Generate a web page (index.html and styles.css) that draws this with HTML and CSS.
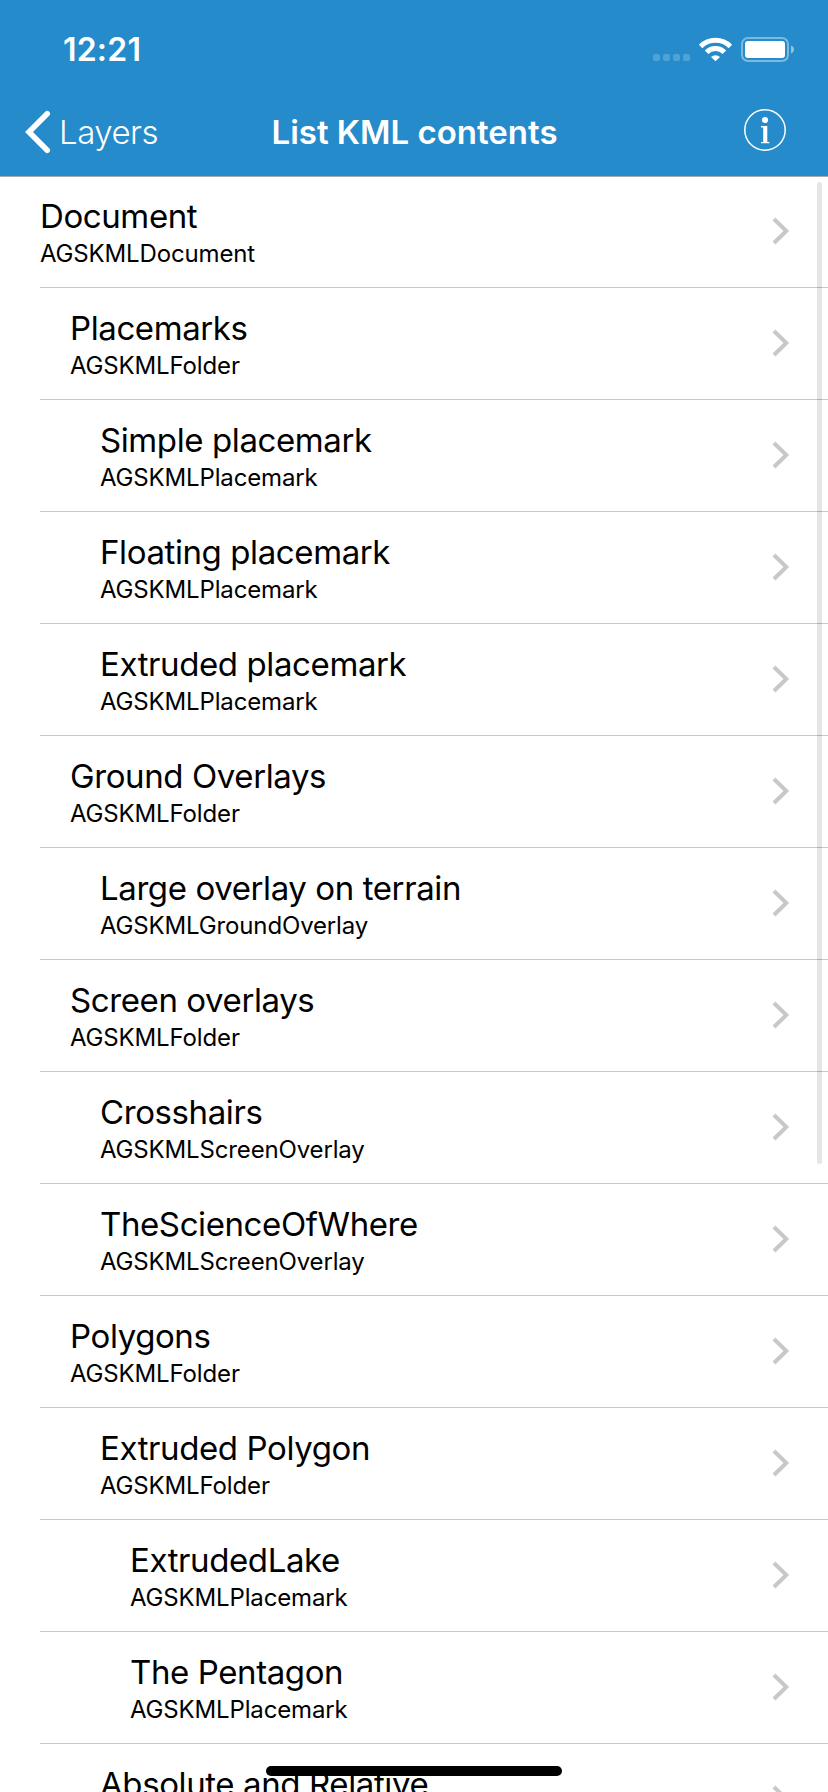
FILE: index.html
```html
<!DOCTYPE html>
<html lang="en">
<head>
<meta charset="utf-8">
<title>List KML contents</title>
<link rel="stylesheet" href="styles.css">
</head>
<body>
<div class="screen">
  <header class="header">
    <div class="status">
      <span class="time">12:21</span>
      <svg class="status-icons" width="144" height="30" viewBox="652 34 144 30">
        <g fill="#fff" fill-opacity=".2">
          <rect x="653" y="54" width="7" height="7" rx="2"/><rect x="663" y="54" width="7" height="7" rx="2"/><rect x="673" y="54" width="7" height="7" rx="2"/><rect x="683" y="54" width="7" height="7" rx="2"/>
        </g>
        <g fill="none" stroke="#fff" stroke-width="5">
          <path d="M700.6 46.4a21 21 0 0 1 29.8 0"/>
          <path d="M706.6 52.3a12.6 12.6 0 0 1 17.8 0"/>
        </g>
        <path d="M711 56.9a6.6 6.6 0 0 1 9 0l-4.5 4.3z" fill="#fff"/>
        <rect x="742" y="38" width="46" height="23" rx="6" fill="none" stroke="#fff" stroke-opacity=".4" stroke-width="2"/>
        <rect x="745" y="41" width="40" height="17" rx="3" fill="#fff"/>
        <path d="M791 45.500c4 1.500 4 6.500 0 8z" fill="#fff" fill-opacity=".5"/>
      </svg>
    </div>
    <nav class="nav">
      <a class="back">
        <svg width="27" height="44" viewBox="25 110 27 44"><path d="M47.200 113.800L29 132l18.200 18.200" fill="none" stroke="#fff" stroke-width="5.600" stroke-linecap="round"/></svg>
        <span class="back-label">Layers</span>
      </a>
      <h1 class="title">List KML contents</h1>
      <svg class="info" width="42" height="42" viewBox="0 0 42 42">
        <circle cx="21" cy="21" r="20.200" fill="none" stroke="#fff" stroke-width="1.500"/>
        <circle cx="21" cy="11" r="3.100" fill="#fff"/>
        <path d="M17 17h6.300v16h2v1.200h-8.300V33h2.200V18.400H17z" fill="#fff"/>
      </svg>
    </nav>
  </header>
  <main class="list">
    <div class="row"><div class="text"><div class="name">Document</div><div class="kind">AGSKMLDocument</div></div><svg class="chevron" viewBox="0 0 18 28"><path d="M2 2l12.300 12L2 26"/></svg></div>
    <div class="row level-1"><div class="text"><div class="name">Placemarks</div><div class="kind">AGSKMLFolder</div></div><svg class="chevron" viewBox="0 0 18 28"><path d="M2 2l12.300 12L2 26"/></svg></div>
    <div class="row level-2"><div class="text"><div class="name">Simple placemark</div><div class="kind">AGSKMLPlacemark</div></div><svg class="chevron" viewBox="0 0 18 28"><path d="M2 2l12.300 12L2 26"/></svg></div>
    <div class="row level-2"><div class="text"><div class="name">Floating placemark</div><div class="kind">AGSKMLPlacemark</div></div><svg class="chevron" viewBox="0 0 18 28"><path d="M2 2l12.300 12L2 26"/></svg></div>
    <div class="row level-2"><div class="text"><div class="name">Extruded placemark</div><div class="kind">AGSKMLPlacemark</div></div><svg class="chevron" viewBox="0 0 18 28"><path d="M2 2l12.300 12L2 26"/></svg></div>
    <div class="row level-1"><div class="text"><div class="name">Ground Overlays</div><div class="kind">AGSKMLFolder</div></div><svg class="chevron" viewBox="0 0 18 28"><path d="M2 2l12.300 12L2 26"/></svg></div>
    <div class="row level-2"><div class="text"><div class="name">Large overlay on terrain</div><div class="kind">AGSKMLGroundOverlay</div></div><svg class="chevron" viewBox="0 0 18 28"><path d="M2 2l12.300 12L2 26"/></svg></div>
    <div class="row level-1"><div class="text"><div class="name">Screen overlays</div><div class="kind">AGSKMLFolder</div></div><svg class="chevron" viewBox="0 0 18 28"><path d="M2 2l12.300 12L2 26"/></svg></div>
    <div class="row level-2"><div class="text"><div class="name">Crosshairs</div><div class="kind">AGSKMLScreenOverlay</div></div><svg class="chevron" viewBox="0 0 18 28"><path d="M2 2l12.300 12L2 26"/></svg></div>
    <div class="row level-2"><div class="text"><div class="name">TheScienceOfWhere</div><div class="kind">AGSKMLScreenOverlay</div></div><svg class="chevron" viewBox="0 0 18 28"><path d="M2 2l12.300 12L2 26"/></svg></div>
    <div class="row level-1"><div class="text"><div class="name">Polygons</div><div class="kind">AGSKMLFolder</div></div><svg class="chevron" viewBox="0 0 18 28"><path d="M2 2l12.300 12L2 26"/></svg></div>
    <div class="row level-2"><div class="text"><div class="name">Extruded Polygon</div><div class="kind">AGSKMLFolder</div></div><svg class="chevron" viewBox="0 0 18 28"><path d="M2 2l12.300 12L2 26"/></svg></div>
    <div class="row level-3"><div class="text"><div class="name">ExtrudedLake</div><div class="kind">AGSKMLPlacemark</div></div><svg class="chevron" viewBox="0 0 18 28"><path d="M2 2l12.300 12L2 26"/></svg></div>
    <div class="row level-3"><div class="text"><div class="name">The Pentagon</div><div class="kind">AGSKMLPlacemark</div></div><svg class="chevron" viewBox="0 0 18 28"><path d="M2 2l12.300 12L2 26"/></svg></div>
    <div class="row level-2"><div class="text"><div class="name">Absolute and Relative</div></div><svg class="chevron" viewBox="0 0 18 28"><path d="M2 2l12.300 12L2 26"/></svg></div>
  </main>
  <div class="scrollbar"></div>
  <div class="home-indicator"></div>
</div>
</body>
</html>
```

FILE: styles.css
```css
* { box-sizing: border-box; }
body {
  margin: 0;
  background: #fff;
  color: #000;
  font-family: Inter, "Liberation Sans", sans-serif;
}
.screen {
  position: relative;
  display: flex;
  flex-direction: column;
  width: 828px;
  height: 1792px;
  overflow: hidden;
}
.header {
  flex: none;
  height: 176px;
  background: #258bca;
  box-shadow: 0 1px #a7a9ac;
  color: #fff;
}
.status {
  display: flex;
  justify-content: space-between;
  height: 88px;
  padding: 34px 32px 0 63px;
}
.time {
  font-size: 32px;
  line-height: 32px;
  font-weight: 600;
  letter-spacing: 0.2px;
}
.nav {
  display: grid;
  grid-template-columns: 1fr auto 1fr;
  height: 88px;
  padding: 0 42px 0 25px;
}
.back {
  display: flex;
  align-items: flex-start;
  gap: 7px;
  padding-top: 22px;
}
.back-label, .title {
  font-size: 33px;
  line-height: 40px;
  white-space: nowrap;
}
.back-label {
  padding-top: 2px;
  font-weight: 350;
  letter-spacing: -0.5px;
}
.title {
  margin: 24px 0 0;
  padding-left: 18px;
  font-weight: 600;
  letter-spacing: 0;
}
.info {
  justify-self: end;
  margin-top: 21px;
}
.list { flex: none; }
.row {
  display: flex;
  justify-content: space-between;
  height: 112px;
  margin-left: 40px;
  padding-right: 38px;
  border-bottom: 1px solid #c8c7cc;
}
.level-1 { padding-left: 30px; }
.level-2 { padding-left: 60px; }
.level-3 { padding-left: 90px; }
.text {
  padding-top: 20px;
  white-space: nowrap;
}
.name {
  font-size: 33px;
  line-height: 40px;
  letter-spacing: -0.4px;
}
.kind {
  font-size: 24px;
  line-height: 30px;
  margin-top: 3px;
  letter-spacing: -0.15px;
}
.chevron {
  flex: none;
  width: 18px;
  height: 28px;
  margin-top: 41px;
  fill: none;
  stroke: #c7c7cc;
  stroke-width: 4;
}
.scrollbar {
  position: absolute;
  top: 182px;
  left: 817px;
  width: 5px;
  height: 982px;
  border-radius: 3px;
  background: rgba(0, 0, 0, 0.1);
}
.home-indicator {
  position: absolute;
  left: 266px;
  bottom: 16px;
  width: 296px;
  height: 10px;
  border-radius: 5px;
  background: #000;
}
```
